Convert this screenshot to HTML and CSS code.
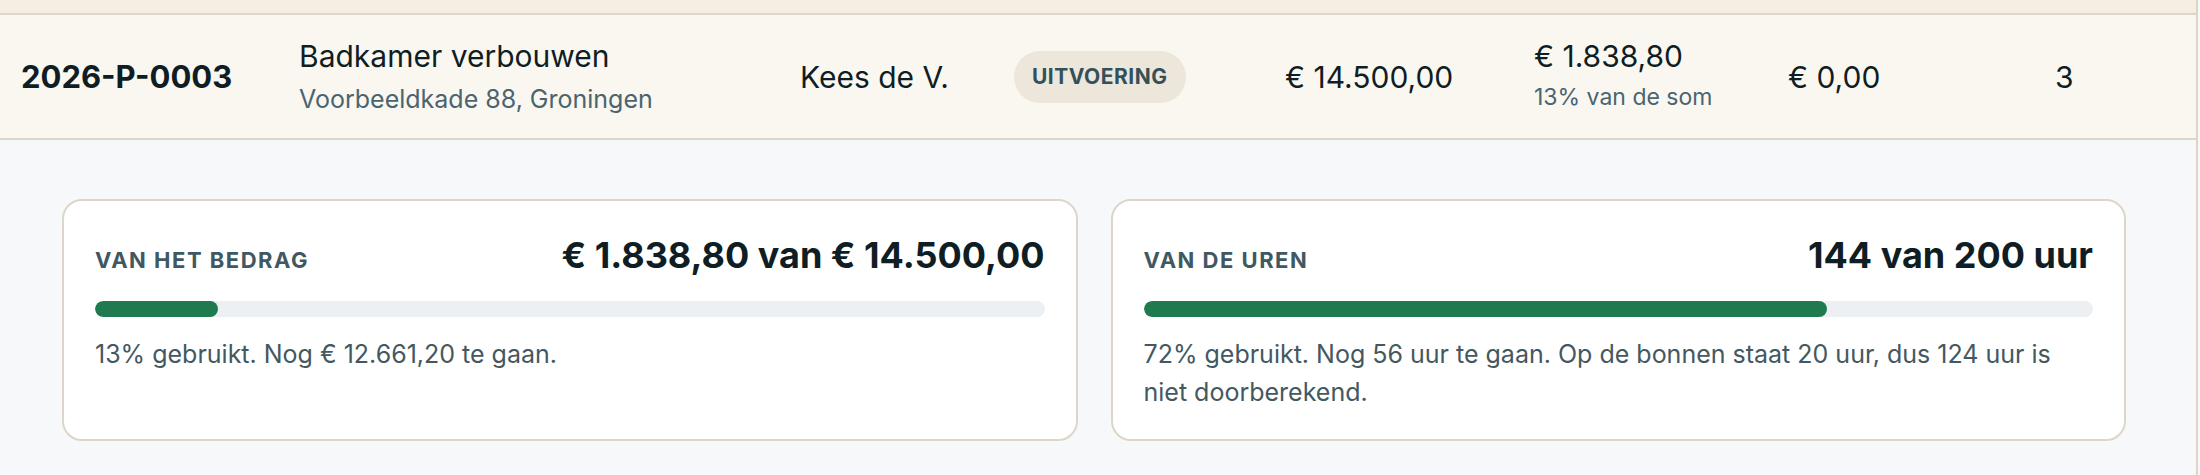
FILE: index.html
```html
<!DOCTYPE html>
<html lang="nl">
<head>
  <meta charset="UTF-8">
  <meta name="viewport" content="width=device-width, initial-scale=1.0">
  <title>Projecten</title>
  <link rel="stylesheet" href="styles.css">
</head>
<body>
  <div class="table">
    <div class="row-prev"></div>
    <div class="row">
      <div class="cell code">2026-P-0003</div>
      <div class="cell">
        <div class="title">Badkamer verbouwen</div>
        <div class="sub">Voorbeeldkade 88, Groningen</div>
      </div>
      <div class="cell name">Kees de V.</div>
      <div class="cell"><span class="badge">Uitvoering</span></div>
      <div class="cell money">€ 14.500,00</div>
      <div class="cell">
        <div class="money">€ 1.838,80</div>
        <div class="sub small">13% van de som</div>
      </div>
      <div class="cell money">€ 0,00</div>
      <div class="cell money">3</div>
    </div>
    <div class="detail">
      <div class="card">
        <div class="card-head">
          <span class="label">Van het bedrag</span>
          <span class="total">€ 1.838,80 van € 14.500,00</span>
        </div>
        <div class="bar"><div class="fill" style="width: 13%"></div></div>
        <p class="note">13% gebruikt. Nog € 12.661,20 te gaan.</p>
      </div>
      <div class="card">
        <div class="card-head">
          <span class="label">Van de uren</span>
          <span class="total">144 van 200 uur</span>
        </div>
        <div class="bar"><div class="fill" style="width: 72%"></div></div>
        <p class="note">72% gebruikt. Nog 56 uur te gaan. Op de bonnen staat 20 uur, dus 124 uur is niet doorberekend.</p>
      </div>
    </div>
  </div>
</body>
</html>
```

FILE: styles.css
```css
* { box-sizing: border-box; }
body {
  margin: 0;
  font-family: Inter, "Noto Sans", sans-serif;
  background: #f7f8fa;
  color: #0f1d24;
}
.table {
  margin-right: 2px;
  border-right: 2px solid #ddd6c8;
  min-height: 475px;
}
.row-prev {
  height: 15px;
  background: #f4eee3;
  border-bottom: 2px solid #ddd6c8;
}
.row {
  display: grid;
  grid-template-columns: 278px 501px 214px 271px 249px 254px 267px 1fr;
  align-items: center;
  height: 125px;
  background: #faf7f0;
  border-bottom: 2px solid #ddd6c8;
}
.cell { padding: 0 21px; }
.code { font-size: 31px; font-weight: 700; }
.title { font-size: 30px; line-height: 40px; }
.sub { font-size: 25px; line-height: 36px; color: #4a6470; margin-top: 5px; }
.sub.small { font-size: 23px; }
.name { font-size: 30px; }
.money { font-size: 30px; }
.badge {
  display: inline-block;
  padding: 0 18px;
  line-height: 52px;
  border-radius: 26px;
  background: #ede6da;
  color: #34505a;
  font-size: 21px;
  font-weight: 700;
  letter-spacing: 0.5px;
  text-transform: uppercase;
}
.detail {
  display: grid;
  grid-template-columns: 1fr 1fr;
  gap: 33px;
  padding: 59px 70px 37px 62px;
}
.card {
  background: #fff;
  border: 2px solid #ddd6c8;
  border-radius: 20px;
  padding: 33px 31px 28px;
}
.card-head {
  display: flex;
  justify-content: space-between;
  align-items: baseline;
}
.label {
  font-size: 22px;
  font-weight: 700;
  letter-spacing: 1.5px;
  text-transform: uppercase;
  color: #3f5862;
}
.total { font-size: 36px; line-height: 43px; font-weight: 700; }
.bar {
  height: 16px;
  margin-top: 24px;
  border-radius: 8px;
  background: #edf0f3;
  overflow: hidden;
}
.fill { height: 100%; border-radius: 8px; background: #1f7a4f; }
.note {
  margin: 19px 0 0;
  font-size: 25px;
  line-height: 37.5px;
  color: #44585f;
}
```
